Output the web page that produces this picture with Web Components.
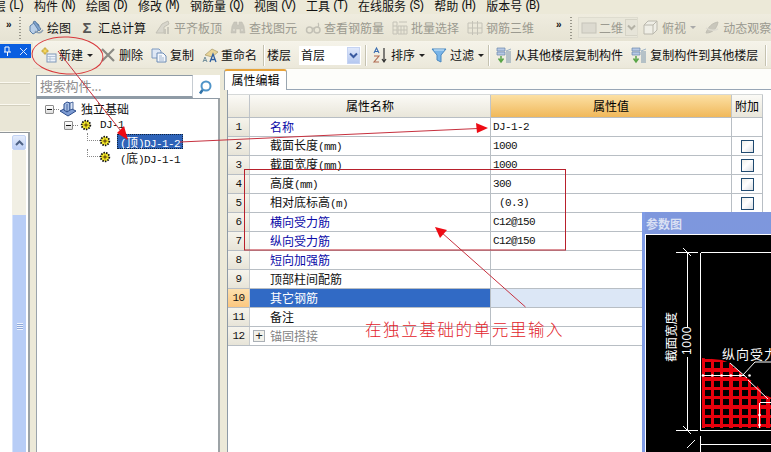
<!DOCTYPE html>
<html lang="zh"><head><meta charset="utf-8"><title>属性编辑</title>
<style>
html,body{margin:0;padding:0;width:771px;height:452px;overflow:hidden;background:#ece9d8}
</style></head>
<body>
<cad-app>
  <cad-menu>
    <menu-item key="(L)" style="margin-left:-6px">层</menu-item><menu-item key="(N)">构件</menu-item><menu-item key="(D)">绘图</menu-item><menu-item key="(M)">修改</menu-item><menu-item key="(Q)">钢筋量</menu-item><menu-item key="(V)">视图</menu-item><menu-item key="(T)">工具</menu-item><menu-item key="(S)">在线服务</menu-item><menu-item key="(H)">帮助</menu-item><menu-item key="(B)">版本号</menu-item>
  </cad-menu>
  <tool-bar class="top" pad="6" height="28" tone="a">
    <tool-more></tool-more>
    <tool-grip style="margin-left:5px"></tool-grip>
    <tool-btn icon="draw" style="margin-left:7px">绘图</tool-btn>
    <tool-btn glyph="Σ" style="margin-left:8px">汇总计算</tool-btn>
    <tool-btn icon="level" dis style="margin-left:9px">平齐板顶</tool-btn>
    <tool-btn icon="binoc" dis style="margin-left:8px">查找图元</tool-btn>
    <tool-btn icon="glass" dis style="margin-left:8px">查看钢筋量</tool-btn>
    <tool-btn icon="batch" dis style="margin-left:8px">批量选择</tool-btn>
    <tool-btn icon="grid3" dis style="margin-left:8px">钢筋三维</tool-btn>
    <tool-more style="margin-left:22px"></tool-more>
    <tool-grip style="margin-left:6px"></tool-grip>
    <tool-combo dis width="58" style="margin-left:7px"><tool-ico icon="plane" slot="pre"></tool-ico>二维</tool-combo>
    <tool-btn icon="cube" dis drop style="margin-left:6px">俯视</tool-btn>
    <tool-btn icon="orbit" dis style="margin-left:8px">动态观察</tool-btn>
  </tool-bar>
  <cad-body>
    <left-dock slot="dock"></left-dock>
    <tool-bar pad="7" height="27" tone="b">
      <tool-btn icon="new" drop>新建</tool-btn>
      <tool-btn icon="del" style="margin-left:7px">删除</tool-btn>
      <tool-btn icon="copy" style="margin-left:8px">复制</tool-btn>
      <tool-btn icon="rename" style="margin-left:8px">重命名</tool-btn>
      <tool-sep style="margin-left:6px"></tool-sep>
      <tool-btn style="margin-left:3px">楼层</tool-btn>
      <tool-combo width="62" style="margin-left:8px">首层</tool-combo>
      <tool-sep style="margin-left:4px"></tool-sep>
      <tool-btn icon="sort" drop style="margin-left:6px">排序</tool-btn>
      <tool-btn icon="filter" drop style="margin-left:6px">过滤</tool-btn>
      <tool-sep style="margin-left:4px"></tool-sep>
      <tool-btn icon="floor" style="margin-left:7px">从其他楼层复制构件</tool-btn>
      <tool-btn icon="floor" style="margin-left:8px">复制构件到其他楼层</tool-btn>
      <tool-sep style="margin-left:7px"></tool-sep>
    </tool-bar>
    <cad-panes>
      <tree-pane>
        <tree-node level="0" box icon="found" gap="4">独立基础</tree-node>
        <tree-node level="1" box icon="gear" gap="6"><mono-t>DJ-1</mono-t></tree-node>
        <tree-node level="2" branch icon="gear" selected><mono-t>(</mono-t>顶<mono-t>)DJ-1-2</mono-t></tree-node>
        <tree-node level="2" branch icon="gear"><mono-t>(</mono-t>底<mono-t>)DJ-1-1</mono-t></tree-node>
      </tree-pane>
      <prop-pane>
        <prop-head>
          <span slot="name">属性名称</span><span slot="value">属性值</span><span slot="extra">附加</span>
        </prop-head>
        <prop-row n="1" kind="link" value="DJ-1-2">名称</prop-row>
        <prop-row n="2" value="1000" check>截面长度<mono-t>(mm)</mono-t></prop-row>
        <prop-row n="3" value="1000" check>截面宽度<mono-t>(mm)</mono-t></prop-row>
        <prop-row n="4" value="300" check>高度<mono-t>(mm)</mono-t></prop-row>
        <prop-row n="5" value=" (0.3)" check>相对底标高<mono-t>(m)</mono-t></prop-row>
        <prop-row n="6" kind="link" value="C12@150">横向受力筋</prop-row>
        <prop-row n="7" kind="link" value="C12@150">纵向受力筋</prop-row>
        <prop-row n="8" kind="link">短向加强筋</prop-row>
        <prop-row n="9">顶部柱间配筋</prop-row>
        <prop-row n="10" selected>其它钢筋</prop-row>
        <prop-row n="11">备注</prop-row>
        <prop-row n="12" kind="muted" plus>锚固搭接</prop-row>
      </prop-pane>
    </cad-panes>
  </cad-body>
  <param-win>参数图</param-win>
  <note-layer>在独立基础的单元里输入</note-layer>
</cad-app>

<script>
const CJK = '"Noto Sans CJK SC","Liberation Sans",sans-serif';
const MONO = '"Liberation Mono","Noto Sans CJK SC",monospace';

const ICONS = {
 draw:`<path d="M2 6l5-4 4 3-1 6-5 3-3-3z" fill="#b9cfe8" stroke="#5a7fa8"/><path d="M5 2l2-1 6 8-2 2z" fill="#7ea3cf" stroke="#47688f" stroke-width=".7"/><path d="M7 11c3 3 6 2 8-1" fill="none" stroke="#8fa1b3" stroke-width="1.5"/>`,
 level:`<path d="M1 13l6-9 6-3 1 3-5 3v6z" fill="#d8d6cc" stroke="#c2c0b5"/><path d="M9 9h2v5H9zM12 7h2v7h-2z" fill="#c8c6bb"/>`,
 binoc:`<path d="M2 6l2-4h3v3h2V2h3l2 4 1 7H10V9H6v4H1z" fill="#c9c7bc" stroke="#bdbbb0" stroke-width=".5"/><path d="M3 10h2M11 10h2" stroke="#e8e6dc"/>`,
 glass:`<circle cx="4.5" cy="10" r="3" fill="none" stroke="#c2c0b5" stroke-width="1.5"/><circle cx="12" cy="10" r="3" fill="none" stroke="#c2c0b5" stroke-width="1.5"/><path d="M7 9c1-1 2-1 3 0M13 8c1-3 1-4 0-5" fill="none" stroke="#c2c0b5" stroke-width="1.2"/>`,
 batch:`<path d="M1 2h4v12H1zM6 6h9v8H6z" fill="none" stroke="#c4c2b7"/><path d="M1 6h4M1 10h4M9 6v8M12 6v8M6 10h9M7 2h8" stroke="#c4c2b7"/>`,
 grid3:`<path d="M1 3h14v10H1zM5.500 1v14M10.500 1v14M1 8h14" fill="none" stroke="#c4c2b7"/>`,
 plane:`<rect x="1" y="3" width="14" height="10" fill="#dcdad0" stroke="#c6c4b9"/>`,
 cube:`<path d="M1 5l4-4h9v9l-4 4H1zM1 5h9v9M10 5l4-4" fill="#efeee6" stroke="#bab8ad"/>`,
 orbit:`<path d="M2 13c2-6 6-10 12-11-1 6-5 11-12 11z" fill="#c9c7bc" stroke="#c0beb3"/><path d="M2 8c3 2 8 3 12 1" fill="none" stroke="#dedcd2" stroke-width="1.5"/>`,
 'new':`<path d="M4 1h2v2h2v2H6v2H4V5H2V3h2z" fill="#f6d860" stroke="#b79a2c" stroke-width=".7"/><rect x="7" y="7" width="9" height="8" fill="#eef3fa" stroke="#7f97b8"/><path d="M7 9.500h9M10 9.500V15M7 12h9" stroke="#a5b7cf" stroke-width=".8"/>`,
 del:`<path d="M2 2l12 12M14 2L2 14" stroke="#8a8a84" stroke-width="2.200"/>`,
 copy:`<path d="M1 2h7l2 2v7H1z" fill="#dfe8f5" stroke="#7e9ac0"/><path d="M6 6h6l3 3v6H6z" fill="#f5f8fc" stroke="#6a8ab5"/><path d="M8 9h3M8 11h5M8 13h5" stroke="#8aa3c5" stroke-width=".8"/>`,
 rename:`<path d="M3 8l7-6 6 3-6 5z" fill="#e8d498" stroke="#a89a68" stroke-width=".7"/><path d="M1 15l2-5 2 5M2 13.500h2" fill="none" stroke="#74909c"/><path d="M8 15l3-8 3 8M9 12.500h4" fill="none" stroke="#2f5fa0" stroke-width="1.300"/>`,
 sort:`<path d="M2 6l2.500-5L7 6M3 4.500h3" fill="none" stroke="#3a6cb0" stroke-width="1.100"/><path d="M2 9h5l-5 6h5" fill="none" stroke="#b06a50" stroke-width="1.100"/><path d="M12 1v13M10 12l2 3 2-3" fill="none" stroke="#333" stroke-width="1.200"/>`,
 filter:`<path d="M1 2h14L10 8v7l-4-2V8z" fill="#78b4e8" stroke="#4a88c0"/><path d="M3 3h10" stroke="#d6ecfb"/>`,
 floor:`<path d="M1 1h8v3H1zM1 5h8v3H1z" fill="#b6c8e4" stroke="#6b86ad" stroke-width=".7"/><path d="M5 9v5M2.500 11.500L5 15l2.500-3.500" fill="none" stroke="#5aa548" stroke-width="1.500"/><path d="M10 5h5M10 7h5M10 9h5M10 11h5M10 13h5M10 15h5" stroke="#7a95ad"/><path d="M10 4l5-2" stroke="#9ab0c5"/>`,
 found:`<path d="M1 10l8-4 8 4-8 5z" fill="#7d9bd2" stroke="#2b4c8c"/><path d="M5 3l3-2 3 1v7l-3 2-3-2z" fill="#a9c0e6" stroke="#2b4c8c"/><path d="M11 2l3-1v7l-3 1zM8 3v8" fill="#dce6f5" stroke="#2b4c8c" stroke-width=".8"/>`,
 gear:`<circle cx="8" cy="8" r="4.300" fill="#f6ea2a" stroke="#111" stroke-width="1.800" stroke-dasharray="1.500 1.100"/><circle cx="8" cy="8" r="1.600" fill="#b98c18"/><path d="M5.500 8h5M8 5.500v5" stroke="#3c3408" stroke-width=".6"/>`,
 search:`<circle cx="7" cy="7" r="4.500" fill="#fff" stroke="#4f94c8" stroke-width="2"/><path d="M3.500 11l-2.500 3.500" stroke="#2f72a8" stroke-width="2.600"/>`
};
const svg = (n,w=16,h=16)=>`<svg width="${w}" height="${h}" viewBox="0 0 ${n==='found'?'18 16':'16 16'}" style="display:block;overflow:visible">${ICONS[n]||''}</svg>`;

function def(tag, css, html, init){
  customElements.define(tag, class extends HTMLElement{
    connectedCallback(){
      if(this.shadowRoot) return;
      const s=this.attachShadow({mode:'open'});
      const body = typeof html==='function'?html(this):html;
      s.innerHTML=`<style>${css}</style>${body}`;
      if(init) init(this,s);
    }
  });
}

def('cad-app',`:host{display:flex;flex-direction:column;position:relative;width:771px;height:452px;overflow:hidden;background:#ece9d8;color:#000;font:12px/14px ${CJK}}`,`<slot></slot>`);

def('cad-menu',`:host{display:flex;flex:none;height:14px;overflow:hidden;background:#ece9d8;line-height:12px}
 div{display:flex;gap:12px;white-space:nowrap}`,`<div><slot></slot></div>`);

def('menu-item',`:host{display:inline-flex;flex:none;color:#111}
 b{font:400 12px/12px ${MONO};width:14px;margin-left:2px;letter-spacing:-2.300px;text-align:center;white-space:nowrap}`,
 el=>`<slot></slot><b>${el.getAttribute('key')}</b>`);

def('tool-bar',`:host{display:flex;flex:none;align-items:center;box-sizing:border-box;white-space:nowrap;overflow:hidden;border-bottom:1px solid #f6f4ea}
 :host([tone=a]){background:linear-gradient(#efecdf,#e6e3d3)}
 :host([tone=b]){background:linear-gradient(#f5f3e9,#ebe8da);border-bottom:1px solid #e2dfcf}`,
 el=>{el.style.height=el.getAttribute('height')+'px';el.style.paddingLeft=el.getAttribute('pad')+'px';return `<slot></slot>`});

def('tool-ico',`:host{display:block;flex:none;width:16px;height:16px}`,el=>svg(el.getAttribute('icon')));

def('tool-btn',`:host{display:inline-flex;flex:none;align-items:center;gap:3px;height:20px;color:#111}
 :host([dis]){color:#9b9a90}
 .g{width:16px;text-align:center;font:700 15px/16px "Liberation Sans",sans-serif;color:#555}
 .d{width:7px;height:16px;display:flex;align-items:center;justify-content:flex-end}
 .d i{border:3px solid transparent;border-top-color:#222;border-bottom:0;display:block;margin-right:0}
 :host([dis]) .d i{border-top-color:#aaa}`,
 el=>{
  const ic=el.getAttribute('icon'),gl=el.getAttribute('glyph');
  return (ic?svg(ic):'')+(gl?`<span class="g">${gl}</span>`:'')+`<slot></slot>`+(el.hasAttribute('drop')?`<span class="d"><i></i></span>`:'');
 });

def('tool-more',`:host{display:block;flex:none;width:8px;font:700 10px/12px "Liberation Sans",sans-serif;color:#111;margin-top:-5px}`,`»`);

def('tool-grip',`:host{display:block;flex:none;width:2px;height:22px;background:repeating-linear-gradient(#9a988c 0 1px,transparent 1px 3px)}`,``);

def('tool-sep',`:host{display:block;flex:none;width:1px;height:21px;background:#c5c2b0;box-shadow:1px 0 #fff}`,``);

def('tool-combo',`:host{display:flex;flex:none;align-items:center;box-sizing:border-box;height:19px;background:#fff;color:#111;padding-left:2px;gap:2px}
 :host([dis]){background:#e9e7da;color:#9b9a90;outline:1px solid #dedccf}
 .f{flex:1;white-space:nowrap}
 .a{flex:none;width:13px;height:17px;background:linear-gradient(#dfe8fb,#b5c8f0);border:1px solid #c5d3f2;box-sizing:border-box;display:flex;align-items:center;justify-content:center;margin-right:1px}
 :host([dis]) .a{background:#e6e4d8;border-color:#d5d3c6}
 .a svg{display:block}`,
 el=>{el.style.width=el.getAttribute('width')+'px';
  const c=el.hasAttribute('dis')?'#b4b2a6':'#3a5aa0';
  return `<slot name="pre"></slot><span class="f"><slot></slot></span><span class="a"><svg width="9" height="7" viewBox="0 0 9 7"><path d="M1 1.500l3.500 3.500L8 1.500" fill="none" stroke="${c}" stroke-width="2"/></svg></span>`});

def('mono-t',`:host{font:11px/14px ${MONO};letter-spacing:-.6px}`,`<slot></slot>`);

def('cad-body',`:host{display:flex;flex:1;min-height:0}
 .col{flex:1;min-width:0;display:flex;flex-direction:column}`,`<slot name="dock"></slot><div class="col"><slot></slot></div>`);

def('left-dock',`:host{display:flex;flex-direction:column;flex:none;width:33px;padding-top:2px;box-sizing:border-box;background:#ece9d8}
 .t{flex:none;width:31px;height:14px;background:#0a5ee0;color:#fff;display:flex;align-items:center;justify-content:space-between;padding:0 3px;box-sizing:border-box}
 .r{flex:none;width:30px;box-sizing:border-box;border-bottom:1px solid #fbf9f0;box-shadow:0 1px #d2cfbe inset;background:#e9e6d6}
 .w{flex:1;width:30px;box-sizing:border-box;background:#fff;border-right:2px solid #9da3a6;border-top:1px solid #8f959a;display:flex;justify-content:flex-start;padding:2px 0 0 12px}
 .s{width:14px;display:flex;flex-direction:column}
 .u{flex:none;height:15px;background:linear-gradient(#e4ecfc,#bdcff5);border:1px solid #c3d3f4;box-sizing:border-box;display:flex;align-items:center;justify-content:center;border-radius:2px}
 .k{flex:none;height:65px;background:#f1efe4}
 .h{flex:1;background:#b8cdf6;border-left:1px solid #d6e2fa;position:relative;display:flex;justify-content:center;padding-top:108px;box-sizing:border-box}
 .h i{display:block;width:6px;height:7px;background:repeating-linear-gradient(#eef3fd 0 1px,#8ca6d8 1px 2px)}`,
 `<div class="t"><svg width="9" height="10" viewBox="0 0 9 10"><path d="M2 1v5M6 1v5M1 6h7M4.500 6v4M2 1h4" stroke="#fff" fill="none"/></svg>
  <svg width="9" height="9" viewBox="0 0 9 9"><path d="M1 1l7 7M8 1L1 8" stroke="#dbe7ff" fill="none"/></svg></div>
  <div class="r" style="height:25px"></div><div class="r" style="height:22px"></div><div class="r" style="height:27px"></div>
  <div class="w"><div class="s"><div class="u"><svg width="9" height="6" viewBox="0 0 9 6"><path d="M1 5l3.500-3.500L8 5" fill="none" stroke="#4d6185" stroke-width="2"/></svg></div><div class="k"></div><div class="h"><i></i></div></div></div>`);

def('cad-panes',`:host{display:flex;flex:1;min-height:0;background:#ece9d8}`,`<slot></slot>`);

def('tree-pane',`:host{display:flex;flex-direction:column;flex:none;width:184px;margin-left:3px;padding-top:6px;box-sizing:border-box}
 .sr{flex:none;display:flex;height:23px;background:#fdfdf9}
 .in{flex:none;width:157px;box-sizing:border-box;background:#fff;border:1px solid #8f9ba6;border-right-color:#c6ccd2;border-bottom:2px solid #8f9ba6;padding-left:3px;color:#8e8e8e;font-size:13px;line-height:19px;letter-spacing:-.2px}
 .bt{flex:1;display:flex;align-items:center;justify-content:center;background:#fff}
 .tr{flex:1;background:#fff;border-left:1px solid #9aa3ab;border-right:2px solid #9da3a6;border-top:1px solid #8f9ba6;padding-top:2px;box-sizing:border-box}`,
 `<div class="sr"><div class="in">搜索构件...</div><div class="bt">${svg('search')}</div></div><div class="tr"><slot></slot></div>`);

const LEFTS={0:8,1:27};
def('tree-node',`:host{display:flex;align-items:center;height:16px;white-space:nowrap;color:#111}
 .bx{flex:none;width:9px;height:9px;box-sizing:border-box;border:1px solid #8c8c8c;background:linear-gradient(#fff,#ddd);display:flex;align-items:center;justify-content:center;border-radius:1px}
 .bx i{display:block;width:5px;height:1px;background:#111}
 .dot{flex:none;height:0;border-top:1px dotted #888}
 .br{flex:none;width:13px;height:50%;align-self:flex-start;box-sizing:border-box;border-left:1px dotted #888;border-bottom:1px dotted #888;margin-left:50px}
 .lb{padding:1px 3px 0;margin-left:4px;height:15px;line-height:14px;box-sizing:border-box}
 :host([selected]) .lb{background:#2e63b8;color:#fff;outline:1px dotted #10243f;outline-offset:-1px}`,
 el=>{
  const lv=+el.getAttribute('level'),ic=el.getAttribute('icon');
  const gap=el.getAttribute('gap');
  if(el.hasAttribute('branch')) return `<span class="br"></span><span style="margin-left:-3px">${svg('gear')}</span><span class="lb"><slot></slot></span>`;
  const icon=ic==='found'?svg('found',18,16):svg('gear');
  return `<span style="width:${LEFTS[lv]}px;flex:none"></span><span class="bx"><i></i></span><span class="dot" style="width:5px"></span>${icon}<span style="width:${gap}px;flex:none"></span><slot></slot>`;
 });

def('prop-pane',`:host{display:flex;flex-direction:column;flex:1;min-width:0;margin-left:4px;padding-top:0;box-sizing:border-box}
 .tabs{flex:none;height:20px;display:flex;background:#fdfdfa;margin-left:3px}
 .tab{flex:none;margin-left:-3px;width:63px;height:21px;box-sizing:border-box;border:1px solid #9aa6b0;border-top:2px solid #e8a33a;border-bottom:0;border-radius:3px 3px 0 0;background:#fff;text-align:center;line-height:18px;position:relative;z-index:1}
 .b{flex:1;margin-left:3px;border-left:1px solid #8e9aa6;border-top:1px solid #98a6b6;background:#fff;padding-top:4px;box-sizing:border-box}`,
 `<div class="tabs"><div class="tab">属性编辑</div></div><div class="b"><slot></slot></div>`);

const COLS='grid-template-columns:22px 241px 241px 31px;width:535px';
def('prop-head',`:host{display:grid;${COLS};height:24px;box-sizing:border-box;border-top:1px solid #d5d8d8;border-bottom:1px solid #b8bec4}
 div{display:flex;align-items:center;justify-content:center;border-right:1px solid #c0c5ca;background:linear-gradient(#fbfaf6,#e9e6da)}
 .v{background:linear-gradient(#fce0a4,#f0b85a)}`,
 `<div></div><div><slot name="name"></slot></div><div class="v"><slot name="value"></slot></div><div><slot name="extra"></slot></div>`);

def('prop-row',`:host{display:grid;${COLS};height:19px;box-sizing:border-box;border-bottom:1px solid #b8bec4;white-space:nowrap;color:#111}
 div{display:flex;align-items:center;border-right:1px solid #b8bec4;box-sizing:border-box;overflow:hidden}
 .n{justify-content:center;background:linear-gradient(#f6f4ec,#e7e4d8);font:11px/14px ${MONO};letter-spacing:-.6px;border-right-color:#c8ccce}
 .l{padding-left:20px}
 .v{padding-left:2px;font:11px/14px ${MONO};letter-spacing:-.6px;white-space:pre}
 .x{justify-content:center}
 .cb{width:13px;height:13px;box-sizing:border-box;border:1px solid #1f4a70;background:linear-gradient(135deg,#eeeee8,#fff 45%,#d9dde2)}
 .p{width:12px;height:12px;box-sizing:border-box;border:1px solid #aab0b6;margin-left:-17px;margin-right:5px;background:#f2f1ea;display:flex;align-items:center;justify-content:center;font:13px/10px "Liberation Sans",sans-serif;color:#222}
 :host([kind=link]) .l{color:#0b0ba8}
 :host([kind=muted]) .l{color:#858585}
 :host([selected]) .n{background:linear-gradient(#fde0ae,#fbc77f)}
 :host([selected]) .l{background:#316ac5;color:#fff}
 :host([selected]) .v,:host([selected]) .x{background:#dce7f6}`,
 el=>`<div class="n">${el.getAttribute('n')}</div><div class="l">${el.hasAttribute('plus')?'<span class="p">+</span>':''}<span><slot></slot></span></div><div class="v">${el.getAttribute('value')||''}</div><div class="x">${el.hasAttribute('check')?'<span class="cb"></span>':''}</div>`);

def('param-win',`:host{position:absolute;left:642px;top:212px;width:140px;height:240px;box-sizing:border-box;border-left:3px solid #7f9ce6;background:linear-gradient(#7e97dd,#7a97e0)}
 .t{height:22px;color:#e9edf8;padding-left:1px;line-height:23px;font-weight:700;font-size:12px;opacity:.85}
 .c{background:#000;border-top:1px solid #fff;border-left:1px solid #fff;height:218px;overflow:hidden}
 svg{display:block}`,
 ()=>{
  let hl='',vl='';
  for(let y=360.5;y<430;y+=9.3) hl+=`M702 ${y}H772`;
  for(let x=703;x<772;x+=9.3) vl+=`M${x} 355V428`;
  let dots='';
  for(let x=703;x<750;x+=9.3) dots+=`<circle cx="${x}" cy="375.500" r="1.300" fill="#fff"/>`;
  return `<div class="t"><slot></slot></div><div class="c"><svg width="126" height="218" viewBox="646 235 126 218">
   <defs><clipPath id="hatch"><path d="M702 358L722 360 730 363 747 378 755 383 765 395 772 398V428H702z"/></clipPath></defs>
   <g clip-path="url(#hatch)"><rect x="702" y="355" width="70" height="74" fill="#000"/><path d="${hl}${vl}" stroke="#e8000c" stroke-width="3.400" fill="none" shape-rendering="crispEdges"/></g>
   <g stroke="#fff" fill="none" shape-rendering="crispEdges">
    <path d="M700.500 252.500H772M700.500 252.500V430.500M700.500 430.500H772"/>
    <path d="M676 252.500H698M676 430.500H698M687.500 252V327M687.500 357V430"/>
    <path d="M759.500 402.500H772M759.500 402.500V428"/>
    <path d="M700 444.500H772M700.500 436V452"/>
    <path d="M702 375.500H745"/>
   </g>
   <g stroke="#fff" fill="none">
    <path d="M683 248l8 8M683 426l8 8M695 440l-8 8"/>
    <path d="M772 362H755L743 375M730 363L747 378M748 380L768 399"/>
   </g>
   ${dots}
   <circle cx="759.500" cy="415" r="1.300" fill="#fff"/><circle cx="759.500" cy="425" r="1.300" fill="#fff"/>
   <g fill="#fff" font-family='"Noto Sans CJK SC",sans-serif'>
    <text x="722" y="359" font-size="13" letter-spacing="1">纵向受力筋</text>
    <text transform="translate(676 362) rotate(-90)" font-size="12.500">截面宽度</text>
    <text transform="translate(691 355) rotate(-90)" font-size="12" font-family='"Liberation Sans",sans-serif' letter-spacing=".6">1000</text>
   </g>
  </svg></div>`;
 });

def('note-layer',`:host{position:absolute;left:0;top:0;width:771px;height:452px;pointer-events:none}
 svg{position:absolute;left:0;top:0}
 .msg{position:absolute;left:365px;top:318px;color:#e2232b;font:300 16.500px/22px ${CJK};letter-spacing:1.600px;white-space:nowrap}`,
 `<svg width="771" height="452" viewBox="0 0 771 452">
   <ellipse cx="67.500" cy="55.500" rx="35.500" ry="18.500" transform="rotate(3 67.500 55.500)" fill="none" stroke="#d8383c" stroke-width="1"/>
   <g fill="none" stroke="#c6303e" stroke-width="1">
    <path d="M58 51L124 135"/>
    <path d="M180 142L478 128.500"/>
    <path d="M525.500 307L441 232"/>
    <rect x="244.500" y="169.500" width="321" height="80.500" stroke="#b8202c"/>
   </g>
   <g fill="#ee0b14">
    <path d="M128 140L117 133L124 126z"/>
    <path d="M488 128L476 123L477 133z"/>
    <path d="M435 227L447 230L440 238z"/>
   </g>
  </svg><div class="msg"><slot></slot></div>`);
</script>
</body></html>
